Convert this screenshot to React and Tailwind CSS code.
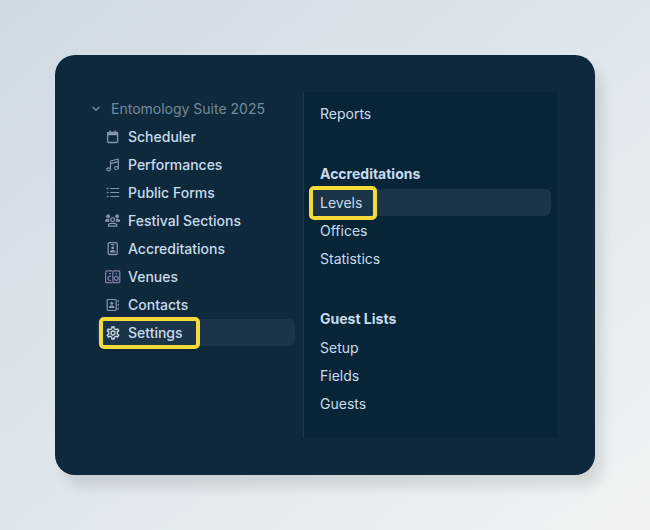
import clsx from "clsx";
import { MdOutlineSettings } from "react-icons/md";

const Icon = ({ children }) => (
  <svg
    viewBox="0 0 16 16"
    className="w-4 h-4 shrink-0"
    fill="none"
    stroke="currentColor"
    strokeWidth="1.2"
    strokeLinecap="round"
    strokeLinejoin="round"
    aria-hidden="true"
  >
    {children}
  </svg>
);

const ChevronIcon = () => (
  <svg
    viewBox="0 0 10 10"
    className="w-2.5 h-2.5"
    fill="none"
    stroke="currentColor"
    strokeWidth="1.4"
    strokeLinecap="round"
    strokeLinejoin="round"
    aria-hidden="true"
  >
    <path d="M2 3.2l3 3 3-3" />
  </svg>
);

const CalendarIcon = () => (
  <Icon>
    <rect x="2.6" y="3.5" width="10" height="10" rx="1" strokeWidth="1.3" />
    <path d="M2.6 3.5h10v2.2h-10z" fill="currentColor" />
    <path d="M5.1 1.9v2M10.1 1.9v2" strokeWidth="1.5" />
  </Icon>
);

const MusicIcon = () => (
  <Icon>
    <path d="M5.5 12V4l7.8-2v8.8M5.5 6.7l7.8-2" />
    <ellipse cx="3.6" cy="12.3" rx="1.9" ry="1.5" />
    <ellipse cx="11.4" cy="11" rx="1.9" ry="1.5" />
  </Icon>
);

const ListIcon = () => (
  <Icon>
    <path d="M5.7 3.5h8M5.7 7.5h8M5.7 11.5h8" />
    <path d="M2.4 3.5h.4M2.4 7.5h.4M2.4 11.5h.4" strokeWidth="1.5" />
  </Icon>
);

const PeopleIcon = () => (
  <Icon>
    <g fill="currentColor" stroke="none">
      <circle cx="3.1" cy="3.2" r="1.9" />
      <circle cx="12.1" cy="3.2" r="1.9" />
      <path d="M0 8.8c0-2 1-3 2.6-3h1.7c-.3 1.1-.2 2.1.3 3zM15.2 8.8c0-2-1-3-2.6-3h-1.7c.3 1.1.2 2.1-.3 3z" />
    </g>
    <circle cx="7.6" cy="6.6" r="1.9" />
    <path d="M3.4 13.2c0-1.9 1-2.8 2.6-2.8h3.2c1.6 0 2.6.9 2.6 2.8z" />
  </Icon>
);

const BadgeIcon = () => (
  <Icon>
    <rect x="3.2" y="1.7" width="9" height="11.8" rx="1.2" strokeWidth="1.3" />
    <path d="M6.3 3.6h2.8" />
    <g fill="currentColor" stroke="none">
      <circle cx="7.7" cy="6.8" r="1.5" />
      <path d="M4.9 11.5c0-1.7.9-2.6 2-2.6h1.6c1.1 0 2 .9 2 2.6z" />
    </g>
  </Icon>
);

const VenuesIcon = () => (
  <Icon>
    <path d="M6.9 1.8H1.9c-.8 0-1.3.5-1.3 1.3v9.3c0 .8.5 1.3 1.3 1.3h5" />
    <rect x="7.8" y="1.8" width="7" height="11.9" rx="1.2" />
    <path d="M5.5 7.3c-1.7-.3-2.6.7-2.6 2s.9 2.3 2.6 2M4.5 4.6h1" />
    <circle cx="11.3" cy="9.3" r="2" />
    <path d="M11.3 4.6v.2" strokeWidth="1.5" />
  </Icon>
);

const ContactsIcon = () => (
  <Icon>
    <rect x="2.2" y="2.5" width="9" height="11" rx="1" />
    <path d="M13.2 3.6v1.2M13.2 7.3v1.2M13.2 11v1.2" />
    <g fill="currentColor" stroke="none">
      <circle cx="6.7" cy="6.2" r="1.5" />
      <path d="M3.9 11c0-1.7.9-2.6 2-2.6h1.6c1.1 0 2 .9 2 2.6z" />
    </g>
  </Icon>
);

const SettingsIcon = () => <MdOutlineSettings className="w-4 h-4 shrink-0" aria-hidden="true" />;

const suiteItems = [
  { label: "Scheduler", icon: CalendarIcon },
  { label: "Performances", icon: MusicIcon },
  { label: "Public Forms", icon: ListIcon },
  { label: "Festival Sections", icon: PeopleIcon },
  { label: "Accreditations", icon: BadgeIcon },
  { label: "Venues", icon: VenuesIcon, tint: "text-[#8381ab]" },
  { label: "Contacts", icon: ContactsIcon },
  { label: "Settings", icon: SettingsIcon, tint: "text-[#d3e0ec]", active: true },
];

const groups = [
  { title: "Accreditations", items: ["Levels", "Offices", "Statistics"] },
  { title: "Guest Lists", items: ["Setup", "Fields", "Guests"] },
];

const Highlight = ({ className }) => (
  <span
    className={clsx(
      "absolute border-4 border-[#f5da3a] rounded-[5px] pointer-events-none",
      className
    )}
  />
);

const SuiteItem = ({ label, icon: ItemIcon, tint, active }) => (
  <li>
    <a
      href="#"
      aria-current={active ? "page" : undefined}
      className={clsx(
        "relative flex items-center gap-[7px] h-[27px] pl-2 rounded-md font-medium",
        active && "bg-[#1b3548]"
      )}
    >
      <span className={tint || "text-[#8496a7]"}>
        <ItemIcon />
      </span>
      {label}
      {active && <Highlight className="left-0.5 -top-0.5 w-[101px] h-8" />}
    </a>
  </li>
);

const PanelLink = ({ label, active }) => (
  <li>
    <a
      href="#"
      aria-current={active ? "page" : undefined}
      className={clsx(
        "relative flex items-center h-[27px] pl-2 rounded-md",
        active && "bg-[#1b3548]"
      )}
    >
      {label}
      {active && <Highlight className="-left-[3px] -top-[3px] w-[68px] h-[34px]" />}
    </a>
  </li>
);

const App = () => {
  return (
    <div className="min-h-screen p-[55px] bg-linear-to-br from-[#d0dae3] via-[#dfe6ed] to-[#eff4f2] font-['Inter',sans-serif] text-sm text-[#c8dcef]">
      <div className="grid grid-cols-[212fr_255fr] py-[37px] pl-9 pr-[37px] rounded-[20px] bg-[#0e293c] shadow-[8px_12px_12px_rgba(0,0,0,0.1)]">
        <nav aria-label="Entomology Suite 2025" className="pt-[3px] pr-2">
          <button type="button" className="flex items-center gap-2.5 h-[27px] text-[#758a9d]">
            <ChevronIcon />
            Entomology Suite 2025
          </button>
          <ul className="flex flex-col gap-px pl-1.5 pt-px">
            {suiteItems.map((item) => (
              <SuiteItem key={item.label} {...item} />
            ))}
          </ul>
        </nav>

        <nav aria-label="Settings" className="pt-2 pb-[21px] pl-2 pr-[7px] bg-[#072536] border-l border-[#1c384a]">
          <ul>
            <PanelLink label="Reports" />
          </ul>
          {groups.map((group) => (
            <section key={group.title} className="pt-[33px]">
              <h2 className="flex items-center h-7 pl-2 font-bold">{group.title}</h2>
              <ul className="flex flex-col gap-px pt-px">
                {group.items.map((label) => (
                  <PanelLink key={label} label={label} active={label === "Levels"} />
                ))}
              </ul>
            </section>
          ))}
        </nav>
      </div>
    </div>
  );
};

export default App;
